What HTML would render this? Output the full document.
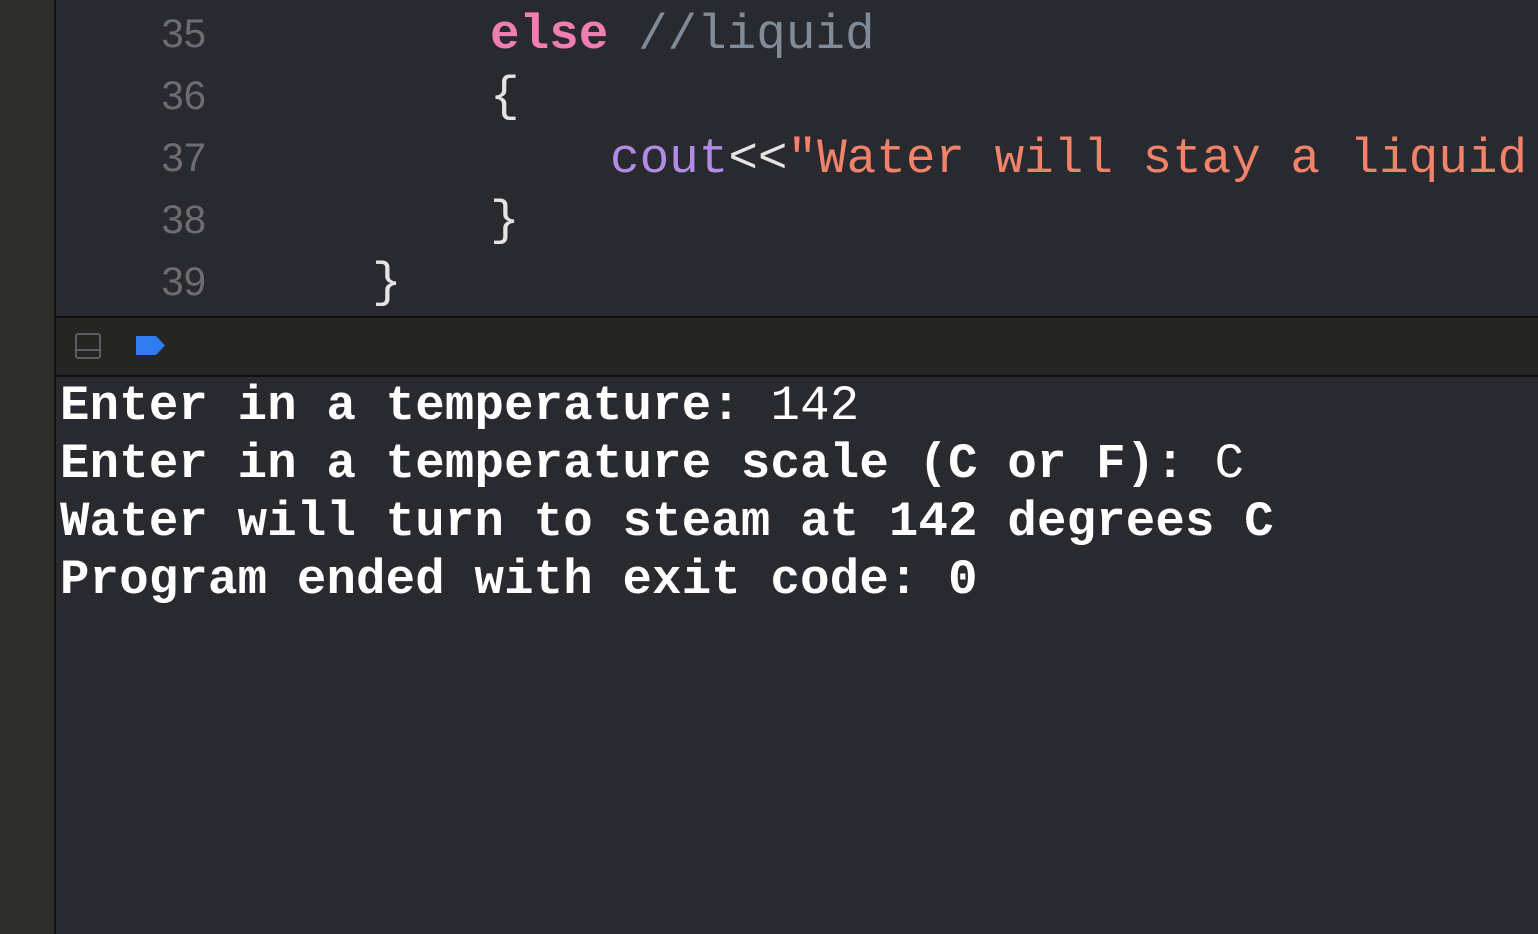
<!DOCTYPE html>
<html><head><meta charset="utf-8"><style>
html,body{margin:0;padding:0;width:1538px;height:934px;overflow:hidden;background:#292a30;}
.side{position:absolute;left:0;top:0;width:54px;height:934px;background:#2d2d29;border-right:2px solid #121212;}
.ln{position:absolute;left:100px;width:106px;text-align:right;font:40px "Liberation Sans",sans-serif;color:#6c6d72;}
.c{position:absolute;font:49.3px "Liberation Mono",monospace;white-space:pre;color:#e4e4e4;}
.kw{color:#f07eb0;font-weight:bold}
.cm{color:#7f8c98}
.pu{color:#b18be6}
.st{color:#f2826a}
.bar{position:absolute;left:56px;top:316px;width:1482px;height:57px;background:#252523;border-top:2px solid #111;border-bottom:2px solid #111;}
.o{position:absolute;left:60px;font:bold 49px "Liberation Mono",monospace;white-space:pre;color:#fff;letter-spacing:0.2px}
</style></head><body>
<div class="side"></div>
<div class="ln" style="top:12px">35</div>
<div class="ln" style="top:74px">36</div>
<div class="ln" style="top:136px">37</div>
<div class="ln" style="top:198px">38</div>
<div class="ln" style="top:260px">39</div>
<div class="c" style="left:490px;top:7px"><span class="kw">else</span> <span class="cm">//liquid</span></div>
<div class="c" style="left:490px;top:69px">{</div>
<div class="c" style="left:610px;top:131px"><span class="pu">cout</span>&lt;&lt;<span class="st">"Water will stay a liquid</span></div>
<div class="c" style="left:490px;top:193px">}</div>
<div class="c" style="left:372px;top:255px">}</div>
<div class="bar">
<div style="position:absolute;left:19px;top:15px;width:22px;height:22px;border:2px solid #5e5e5e;border-radius:3px;"><div style="position:absolute;left:0;right:0;top:14px;height:2px;background:#5e5e5e"></div></div>
<svg style="position:absolute;left:80px;top:18px" width="30" height="20"><path d="M0 0H20L29 9.5L20 19H0Z" fill="#2f7cf0"/></svg>
</div>
<div class="o" style="top:378px">Enter in a temperature: <span style="font-weight:normal">142</span></div>
<div class="o" style="top:436px">Enter in a temperature scale (C or F): <span style="font-weight:normal">C</span></div>
<div class="o" style="top:494px">Water will turn to steam at 142 degrees C</div>
<div class="o" style="top:552px">Program ended with exit code: 0</div>
</body></html>
